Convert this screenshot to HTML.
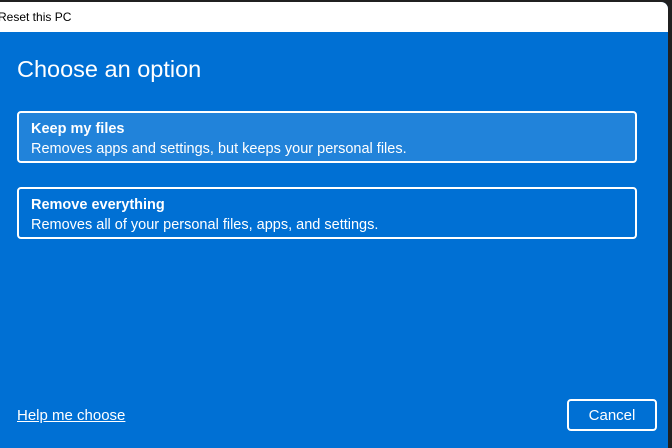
<!DOCTYPE html>
<html><head><style>
html,body{margin:0;padding:0;width:672px;height:448px;overflow:hidden;background:#202020;font-family:"Liberation Sans",sans-serif;}
.win{position:absolute;left:0;top:2px;width:668px;height:446px;background:#0070d4;border-top-right-radius:7px;overflow:hidden;}
.title{height:30px;background:#fff;font-size:12px;color:#000;line-height:30px;text-indent:-2px;}
h1{position:absolute;left:17px;top:54px;margin:0;font-weight:normal;font-size:23.5px;color:#fff;}
.opt{position:absolute;left:17px;width:620px;height:52px;border:2px solid #fff;border-radius:4px;color:#fff;box-sizing:border-box;}
.opt b{position:absolute;left:12px;top:8px;font-size:14.5px;}
.opt span{position:absolute;left:12px;top:28px;font-size:14.5px;}
.help{position:absolute;left:17px;top:405px;font-size:15px;color:#fff;text-decoration:underline;}
.cancel{position:absolute;left:567px;top:397px;width:90px;height:32px;border:2px solid #fff;border-radius:4px;box-sizing:border-box;color:#fff;font-size:15px;text-align:center;line-height:30px;}
</style></head><body>
<div class="win">
<div class="title">Reset this PC</div>
<h1>Choose an option</h1>
<div class="opt" style="top:109px;background:#2183da;"><b>Keep my files</b><span>Removes apps and settings, but keeps your personal files.</span></div>
<div class="opt" style="top:185px;"><b>Remove everything</b><span>Removes all of your personal files, apps, and settings.</span></div>
<div class="help">Help me choose</div>
<div class="cancel">Cancel</div>
</div>
</body></html>
